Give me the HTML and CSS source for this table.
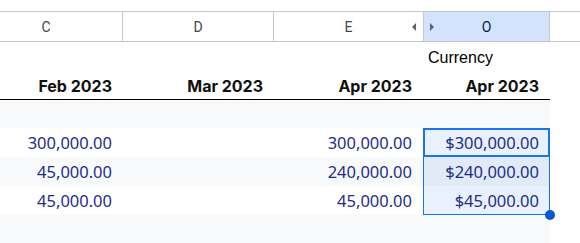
FILE: index.html
```html
<!DOCTYPE html>
<html lang="en">
<head>
    <meta charset="UTF-8">
    <title>Sheet</title>
    <link rel="stylesheet" href="styles.css">
</head>
<body>

    <div class="sheet">
        <!-- COLUMN LETTERS -->
        <div class="col-heads">
            <div class="col-head w-c">C</div>
            <div class="col-head w-d">D</div>
            <div class="col-head w-e">E<span class="arrow arrow-left"></span></div>
            <div class="col-head w-o is-selected"><span class="arrow arrow-right"></span>O</div>
            <div class="col-head filler"></div>
        </div>

        <!-- HEADERS -->
        <div class="row row-label">
            <div class="cell c-c"></div>
            <div class="cell c-d"></div>
            <div class="cell c-e"></div>
            <div class="cell c-o label">Currency</div>
        </div>
        <div class="row row-dates">
            <div class="cell c-c">Feb 2023</div>
            <div class="cell c-d">Mar 2023</div>
            <div class="cell c-e">Apr 2023</div>
            <div class="cell c-o">Apr 2023</div>
        </div>

        <!-- DATA -->
        <div class="row band first"></div>
        <div class="row">
            <div class="cell c-c num">300,000.00</div>
            <div class="cell c-d num"></div>
            <div class="cell c-e num">300,000.00</div>
            <div class="cell c-o num sel active">$300,000.00</div>
        </div>
        <div class="row band">
            <div class="cell c-c num">45,000.00</div>
            <div class="cell c-d num"></div>
            <div class="cell c-e num">240,000.00</div>
            <div class="cell c-o num sel">$240,000.00</div>
        </div>
        <div class="row">
            <div class="cell c-c num">45,000.00</div>
            <div class="cell c-d num"></div>
            <div class="cell c-e num">45,000.00</div>
            <div class="cell c-o num sel last">$45,000.00</div>
        </div>
        <div class="row band"></div>
    </div>

</body>
</html>
```

FILE: styles.css
```css
:root { --grid: #c7c7c7; --band: #f8f9fa; --blue: #1a73e8; --handle: #0b57d0; --num: #1f2d8a; }
* { box-sizing: border-box; }

body { margin: 0; background: white; overflow: hidden; }

.sheet { margin-left: -30px; padding-top: 11px; }

/* COLUMN LETTERS */
.col-heads { display: flex; height: 31px; border-top: 1px solid var(--grid); border-bottom: 1px solid var(--grid); font-family: Roboto, sans-serif; font-size: 14px; color: #444746; }
.col-head { position: relative; display: flex; align-items: center; justify-content: center; border-right: 1px solid var(--grid); }
.col-head.w-c { width: 153px; }
.col-head.w-d { width: 151px; }
.col-head.w-e { width: 150px; }
.col-head.w-o { width: 126px; }
.col-head.filler { flex: 1; border-right: none; }
.col-head.is-selected { background: #d3e3fd; color: #041e49; }

.arrow { position: absolute; top: 11px; width: 0; height: 0; border-top: 4px solid transparent; border-bottom: 4px solid transparent; }
.arrow-left { right: 7px; border-right: 4px solid #5f6368; }
.arrow-right { left: 6px; border-left: 4px solid #5f6368; }

/* ROWS */
.row { display: flex; width: 580px; height: 29px; }
.row.band { background: var(--band); }
.row.band.first { height: 28px; }

.cell { display: flex; align-items: center; justify-content: flex-end; padding-right: 11px; }
.c-c { width: 153px; }
.c-d { width: 151px; }
.c-e { width: 149px; }
.c-o { width: 127px; }

.row-label .cell { align-items: flex-end; padding-bottom: 4px; }
.cell.label { justify-content: flex-start; padding-left: 5px; font-family: 'Liberation Sans', Arial, sans-serif; font-size: 16px; color: #000; }

.row-dates { height: 29px; border-bottom: 1px solid #000; }
.row-dates .cell { font-family: Inter, sans-serif; font-weight: 700; font-size: 16px; color: #111; padding-top: 1px; }

.num { font-family: 'Noto Sans', 'Open Sans', sans-serif; font-size: 16.5px; color: var(--num); }

/* SELECTION */
.sel { position: relative; background: rgba(26, 115, 232, 0.1); box-shadow: inset 1px 0 0 var(--blue), inset -1px 0 0 var(--blue); }
.sel.active { box-shadow: inset 0 0 0 2px var(--blue); }
.sel.last { box-shadow: inset 1px 0 0 var(--blue), inset -1px 0 0 var(--blue), inset 0 -1px 0 var(--blue); }
.sel.last::after { content: ''; position: absolute; right: -5px; bottom: -5px; width: 10px; height: 10px; border-radius: 50%; background: var(--handle); z-index: 2; }
```
